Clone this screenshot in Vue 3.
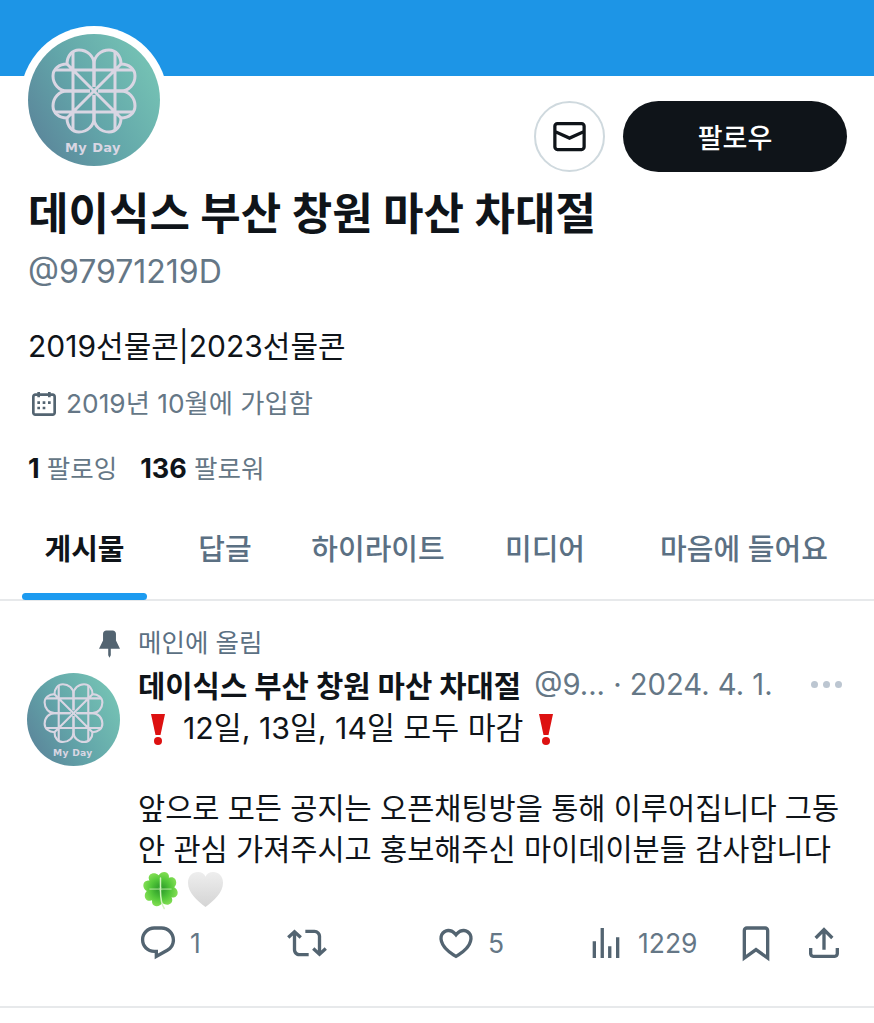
<template>
  <div class="page">
    <div class="banner"></div>

    <section class="profile">
      <div class="top-row">
        <div class="avatar-ring">
          <div class="avatar avatar-big">
            <svg viewBox="-66 -66 132 132" class="logo">
              <g id="clover" transform="translate(0,-9)" fill="none" stroke="#d9d6e3" stroke-width="3" stroke-linejoin="round">
                <g v-for="m in mirrors" :key="m" :transform="m">
                  <path d="M0 -4 V-27 C0 -35 -7 -41 -15 -41 C-22 -41 -27 -35 -27 -27 C-35 -27 -41 -22 -41 -15 C-41 -7 -35 0 -27 0 H-4" />
                  <path d="M-21 -39 V0 M-39 -21 H0 M-27 -27 L0 0" />
                </g>
              </g>
              <text x="-1" y="52" text-anchor="middle" class="logo-text">My Day</text>
            </svg>
          </div>
        </div>
        <div class="actions">
          <button class="mail-btn">
            <svg viewBox="0 0 24 24" class="mail-icon"><path :d="icons.mail" /></svg>
          </button>
          <button class="follow-btn">팔로우</button>
        </div>
      </div>

      <h1 class="name">데이식스 부산 창원 마산 차대절</h1>
      <div class="handle">@97971219D</div>
      <div class="bio">2019선물콘|2023선물콘</div>
      <div class="joined">
        <svg viewBox="0 0 24 24" class="cal-icon"><path :d="icons.calendar" /></svg>
        <span>2019년 10월에 가입함</span>
      </div>
      <div class="stats">
        <span><b>1</b> 팔로잉</span>
        <span><b>136</b> 팔로워</span>
      </div>
    </section>

    <nav class="tabs">
      <div v-for="(t, i) in tabs" :key="t" class="tab" :class="{ active: i === 0 }">
        {{ t }}
        <i v-if="i === 0" class="tab-bar"></i>
      </div>
    </nav>

    <article class="post">
      <div class="pinned">
        <svg viewBox="0 0 24 24" class="pin-icon"><path :d="icons.pin" /></svg>
        <span>메인에 올림</span>
      </div>
      <div class="post-row">
        <div class="avatar avatar-small">
          <svg viewBox="-66 -66 132 132" class="logo">
            <use href="#clover" />
            <text x="-1" y="52" text-anchor="middle" class="logo-text">My Day</text>
          </svg>
        </div>
        <div class="post-main">
          <div class="post-head">
            <span class="post-name">데이식스 부산 창원 마산 차대절</span>
            <span class="post-meta">@9... · 2024. 4. 1.</span>
            <span class="dots"><i></i><i></i><i></i></span>
          </div>
          <div class="post-text">
            <div class="headline">
              <svg viewBox="0 0 16 32" class="bang"><path d="M1 1 H15 L10.5 22 H5.5 Z" fill="#dd1111" /><circle cx="8" cy="28" r="4" fill="#dd1111" /></svg>
              <span>12일, 13일, 14일 모두 마감</span>
              <svg viewBox="0 0 16 32" class="bang"><path d="M1 1 H15 L10.5 22 H5.5 Z" fill="#dd1111" /><circle cx="8" cy="28" r="4" fill="#dd1111" /></svg>
            </div>
            <p>앞으로 모든 공지는 오픈채팅방을 통해 이루어집니다 그동<br />안 관심 가져주시고 홍보해주신 마이데이분들 감사합니다</p>
            <div class="emojis">
              <svg viewBox="-20 -20 40 42" class="clover">
                <defs>
                  <radialGradient id="leaf" cx="50%" cy="85%" r="85%">
                    <stop offset="0%" stop-color="#2f9e2b" />
                    <stop offset="55%" stop-color="#55c93a" />
                    <stop offset="100%" stop-color="#7fdc52" />
                  </radialGradient>
                  <linearGradient id="silver" x1="0" y1="0" x2="0" y2="1">
                    <stop offset="0%" stop-color="#eeeeee" />
                    <stop offset="100%" stop-color="#d4d4d4" />
                  </linearGradient>
                </defs>
                <path v-for="r in leafTurns" :key="r" :transform="`rotate(${r})`" fill="url(#leaf)" d="M0 0 C-4 -4 -11 -6 -11 -13 C-11 -18 -4 -20 0 -15 C4 -20 11 -18 11 -13 C11 -6 4 -4 0 0 Z" />
                <path d="M0 -12 V2 C0 10 1 16 4 21" fill="none" stroke="#d3f3c0" stroke-width="1.6" stroke-linecap="round" />
                <path d="M-12 0 H12" stroke="#c0ecaa" stroke-width="1" />
              </svg>
              <svg viewBox="0 0 38 38" class="heart">
                <path d="M19 37 C10 30 1 22 1 12 C1 5 6 1 11 1 C15 1 18 3 19 6 C20 3 23 1 27 1 C32 1 37 5 37 12 C37 22 28 30 19 37 Z" fill="url(#silver)" />
              </svg>
            </div>
          </div>
          <div class="post-actions">
            <div v-for="a in actions" :key="a.name" class="action">
              <svg viewBox="0 0 24 24" :class="a.name"><path :d="icons[a.name]" /></svg>
              <span v-if="a.count">{{ a.count }}</span>
            </div>
          </div>
        </div>
      </div>
    </article>
  </div>
</template>

<script setup>
const mirrors = ['scale(1,1)', 'scale(-1,1)', 'scale(1,-1)', 'scale(-1,-1)']
const leafTurns = [-8, 82, 172, 262]

const tabs = ['게시물', '답글', '하이라이트', '미디어', '마음에 들어요']

const actions = [
  { name: 'reply', count: '1' },
  { name: 'retweet' },
  { name: 'like', count: '5' },
  { name: 'views', count: '1229' },
  { name: 'bookmark' },
  { name: 'share' }
]

const icons = {
  mail: 'M1.998 5.5c0-1.381 1.119-2.5 2.5-2.5h15c1.381 0 2.5 1.119 2.5 2.5v13c0 1.381-1.119 2.5-2.5 2.5h-15c-1.381 0-2.5-1.119-2.5-2.5v-13zm2.5-.5c-.276 0-.5.224-.5.5v2.764l8 3.638 8-3.636V5.5c0-.276-.224-.5-.5-.5h-15zm15.5 5.463l-8 3.636-8-3.638V18.5c0 .276.224.5.5.5h15c.276 0 .5-.224.5-.5v-8.037z',
  calendar: 'M7 4V3h2v1h6V3h2v1h1.5C19.89 4 21 5.12 21 6.5v12c0 1.38-1.11 2.5-2.5 2.5h-13C4.12 21 3 19.88 3 18.5v-12C3 5.12 4.12 4 5.5 4H7zm0 2H5.5c-.27 0-.5.22-.5.5v12c0 .28.23.5.5.5h13c.28 0 .5-.22.5-.5v-12c0-.28-.22-.5-.5-.5H17v1h-2V6H9v1H7V6zm0 6h2v-2H7v2zm0 4h2v-2H7v2zm4-4h2v-2h-2v2zm0 4h2v-2h-2v2zm4-4h2v-2h-2v2z',
  pin: 'M7 4.5C7 3.12 8.12 2 9.5 2h5C15.88 2 17 3.12 17 4.5v5.26L20.12 16H13v5l-1 2-1-2v-5H3.88L7 9.76V4.5z',
  reply: 'M1.751 10c0-4.42 3.584-8 8.005-8h4.366c4.49 0 8.129 3.64 8.129 8.13 0 2.96-1.607 5.68-4.196 7.11l-8.054 4.46v-3.69h-.067c-4.49.1-8.183-3.51-8.183-8.01zm8.005-6c-3.317 0-6.005 2.69-6.005 6 0 3.37 2.77 6.08 6.138 6.01l.351-.01h1.761v2.3l5.087-2.81c1.951-1.08 3.163-3.13 3.163-5.36 0-3.39-2.744-6.13-6.129-6.13H9.756z',
  retweet: 'M4.5 3.88l4.432 4.14-1.364 1.46L5.5 7.55V16c0 1.1.896 2 2 2H13v2H7.5c-2.209 0-4-1.79-4-4V7.55L1.432 9.48.068 8.02 4.5 3.88zM16.5 6H11V4h5.5c2.209 0 4 1.79 4 4v8.45l2.068-1.93 1.364 1.46-4.432 4.14-4.432-4.14 1.364-1.46 2.068 1.93V8c0-1.1-.896-2-2-2z',
  like: 'M16.697 5.5c-1.222-.06-2.679.51-3.89 2.16l-.805 1.09-.806-1.09C9.984 6.01 8.526 5.44 7.304 5.5c-1.243.07-2.349.78-2.91 1.91-.552 1.12-.633 2.78.479 4.82 1.074 1.97 3.257 4.27 7.129 6.61 3.87-2.34 6.052-4.64 7.126-6.61 1.111-2.04 1.03-3.7.477-4.82-.561-1.13-1.666-1.84-2.908-1.91zm4.187 7.69c-1.351 2.48-4.001 5.12-8.379 7.67l-.503.3-.504-.3c-4.379-2.55-7.029-5.19-8.382-7.67-1.36-2.5-1.41-4.86-.514-6.67.887-1.79 2.647-2.91 4.601-3.01 1.651-.09 3.368.56 4.798 2.01 1.429-1.45 3.146-2.1 4.796-2.01 1.954.1 3.714 1.22 4.601 3.01.896 1.81.846 4.17-.514 6.67z',
  views: 'M8.75 21V3h2v18h-2zM18 21V8.5h2V21h-2zM4 21l.004-10h2L6 21H4zm9.248 0v-7h2v7h-2z',
  bookmark: 'M4 4.5C4 3.12 5.119 2 6.5 2h11C18.881 2 20 3.12 20 4.5v18.44l-8-5.71-8 5.71V4.5zM6.5 4c-.276 0-.5.22-.5.5v14.56l6-4.29 6 4.29V4.5c0-.28-.224-.5-.5-.5h-11z',
  share: 'M12 2.59l5.7 5.7-1.41 1.42L13 6.41V16h-2V6.41l-3.3 3.3-1.41-1.42L12 2.59zM21 15l-.02 3.51c0 1.38-1.12 2.49-2.5 2.49H5.5C4.11 21 3 19.88 3 18.5V15h2v3.5c0 .28.22.5.5.5h12.98c.28 0 .5-.22.5-.5L19 15h2z'
}
</script>

<style>
body {
  background: #fff;
}
</style>

<style scoped>
.page {
  width: 874px;
  height: 1023px;
  overflow: hidden;
  background: #fff;
  color: #0f1419;
  font-family: Inter, "Noto Sans CJK KR", sans-serif;
}

.banner {
  height: 76px;
  background: #1d95e6;
}

.profile {
  padding: 0 28px;
}

.top-row {
  display: flex;
  justify-content: space-between;
  align-items: flex-start;
}

.avatar-ring {
  width: 148px;
  height: 148px;
  margin: -50px 0 0 -8px;
  padding: 8px;
  box-sizing: border-box;
  border-radius: 50%;
  background: #fff;
  position: relative;
}

.avatar {
  border-radius: 50%;
  background: linear-gradient(60deg, #5a8198 4%, #62a5a9 45%, #78c7b6 96%);
  overflow: hidden;
}

.avatar-big {
  width: 132px;
  height: 132px;
}

.avatar-small {
  width: 93px;
  height: 93px;
  flex: none;
  margin-top: 14px;
}

.logo {
  display: block;
  width: 100%;
  height: 100%;
}

.logo-text {
  font-family: "DejaVu Sans", sans-serif;
  font-size: 13px;
  font-weight: 700;
  fill: #d9d6e3;
  letter-spacing: 0.4px;
}

.actions {
  display: flex;
  gap: 18px;
  margin: 25px -1px 0 0;
}

.mail-btn {
  width: 71px;
  height: 71px;
  padding: 0;
  background: #fff;
  border: 2px solid #cfd9de;
  border-radius: 50%;
  display: flex;
  align-items: center;
  justify-content: center;
}

.mail-icon {
  width: 39px;
  height: 39px;
  fill: #0f1419;
}

.follow-btn {
  width: 224px;
  height: 71px;
  border: 0;
  border-radius: 36px;
  background: #0f1419;
  color: #fff;
  font: 500 27px "Noto Sans CJK KR", sans-serif;
}

.name {
  margin: 14px 0 0;
  font-size: 44px;
  line-height: 52px;
  font-weight: 700;
  white-space: nowrap;
}

.handle {
  margin-top: 14px;
  font-size: 32px;
  line-height: 36px;
  color: #657786;
}

.bio {
  margin-top: 36px;
  font-size: 30px;
  line-height: 40px;
}

.joined {
  display: flex;
  align-items: center;
  gap: 6px;
  margin-top: 18px;
  font-size: 26.3px;
  line-height: 40px;
  color: #657786;
}

.cal-icon {
  width: 32px;
  height: 32px;
  fill: #536471;
}

.stats {
  display: flex;
  gap: 23px;
  margin-top: 27px;
  font-size: 25.5px;
  line-height: 36px;
  color: #657786;
}

.stats b {
  color: #0f1419;
  font-size: 27px;
  font-weight: 700;
}

.tabs {
  display: grid;
  grid-template-columns: 125px 156px 150px 184px 214px;
  margin-top: 37px;
  padding-left: 22px;
  height: 75px;
  border-bottom: 2px solid #e7e9eb;
}

.tab {
  position: relative;
  text-align: center;
  font-size: 29px;
  font-weight: 500;
  line-height: 52px;
  color: #5b7083;
  white-space: nowrap;
}

.tab.active {
  color: #0f1419;
  font-weight: 700;
}

.tab-bar {
  position: absolute;
  left: 0;
  right: 0;
  bottom: -1px;
  height: 7px;
  border-radius: 4px;
  background: #1d9bf0;
}

.post {
  padding: 26px 28px 0 27px;
}

.pinned {
  display: flex;
  align-items: center;
  gap: 13px;
  margin-left: 67px;
  font-size: 25.5px;
  line-height: 32px;
  color: #5b7083;
}

.pin-icon {
  width: 31px;
  height: 31px;
  fill: #536471;
}

.post-row {
  display: flex;
  gap: 18px;
  align-items: flex-start;
}

.post-main {
  flex: 1;
  min-width: 0;
}

.post-head {
  display: flex;
  align-items: center;
  height: 44px;
  margin-top: 3px;
  white-space: nowrap;
}

.post-name {
  font-size: 29.7px;
  font-weight: 700;
}

.post-meta {
  margin-left: 13px;
  font-size: 29.2px;
  color: #657786;
}

.dots {
  display: flex;
  gap: 5px;
  margin-left: auto;
  margin-right: 4px;
}

.dots i {
  width: 7px;
  height: 7px;
  border-radius: 50%;
  background: #bcc6d1;
}

.post-text {
  font-size: 29.5px;
  line-height: 41px;
}

.headline {
  display: flex;
  align-items: center;
  height: 41px;
  margin-top: 2px;
  white-space: nowrap;
}

.headline span {
  margin: 0 15px 0 17px;
  font-size: 30.3px;
}

.bang {
  width: 16px;
  height: 32px;
  flex: none;
}

.headline .bang:first-child {
  margin-left: 12px;
}

.post-text p {
  margin: 39px 0 0;
  white-space: nowrap;
}

.emojis {
  display: flex;
  gap: 8px;
  align-items: center;
  height: 41px;
  margin: -1px 0 0 4px;
}

.clover {
  width: 37px;
  height: 40px;
}

.heart {
  width: 37px;
  height: 37px;
}

.post-actions {
  display: grid;
  grid-template-columns: 149px 149px 150px 150px 68px 40px;
  margin-top: 13px;
  align-items: center;
}

.action {
  display: flex;
  align-items: center;
  gap: 12px;
  font-size: 26.5px;
  color: #657786;
  height: 40px;
}

.action svg {
  width: 40px;
  height: 40px;
  fill: #536471;
}

.post::after {
  content: "";
  display: block;
  height: 2px;
  margin: 43px -28px 0 -27px;
  background: #e7e9eb;
}
</style>
